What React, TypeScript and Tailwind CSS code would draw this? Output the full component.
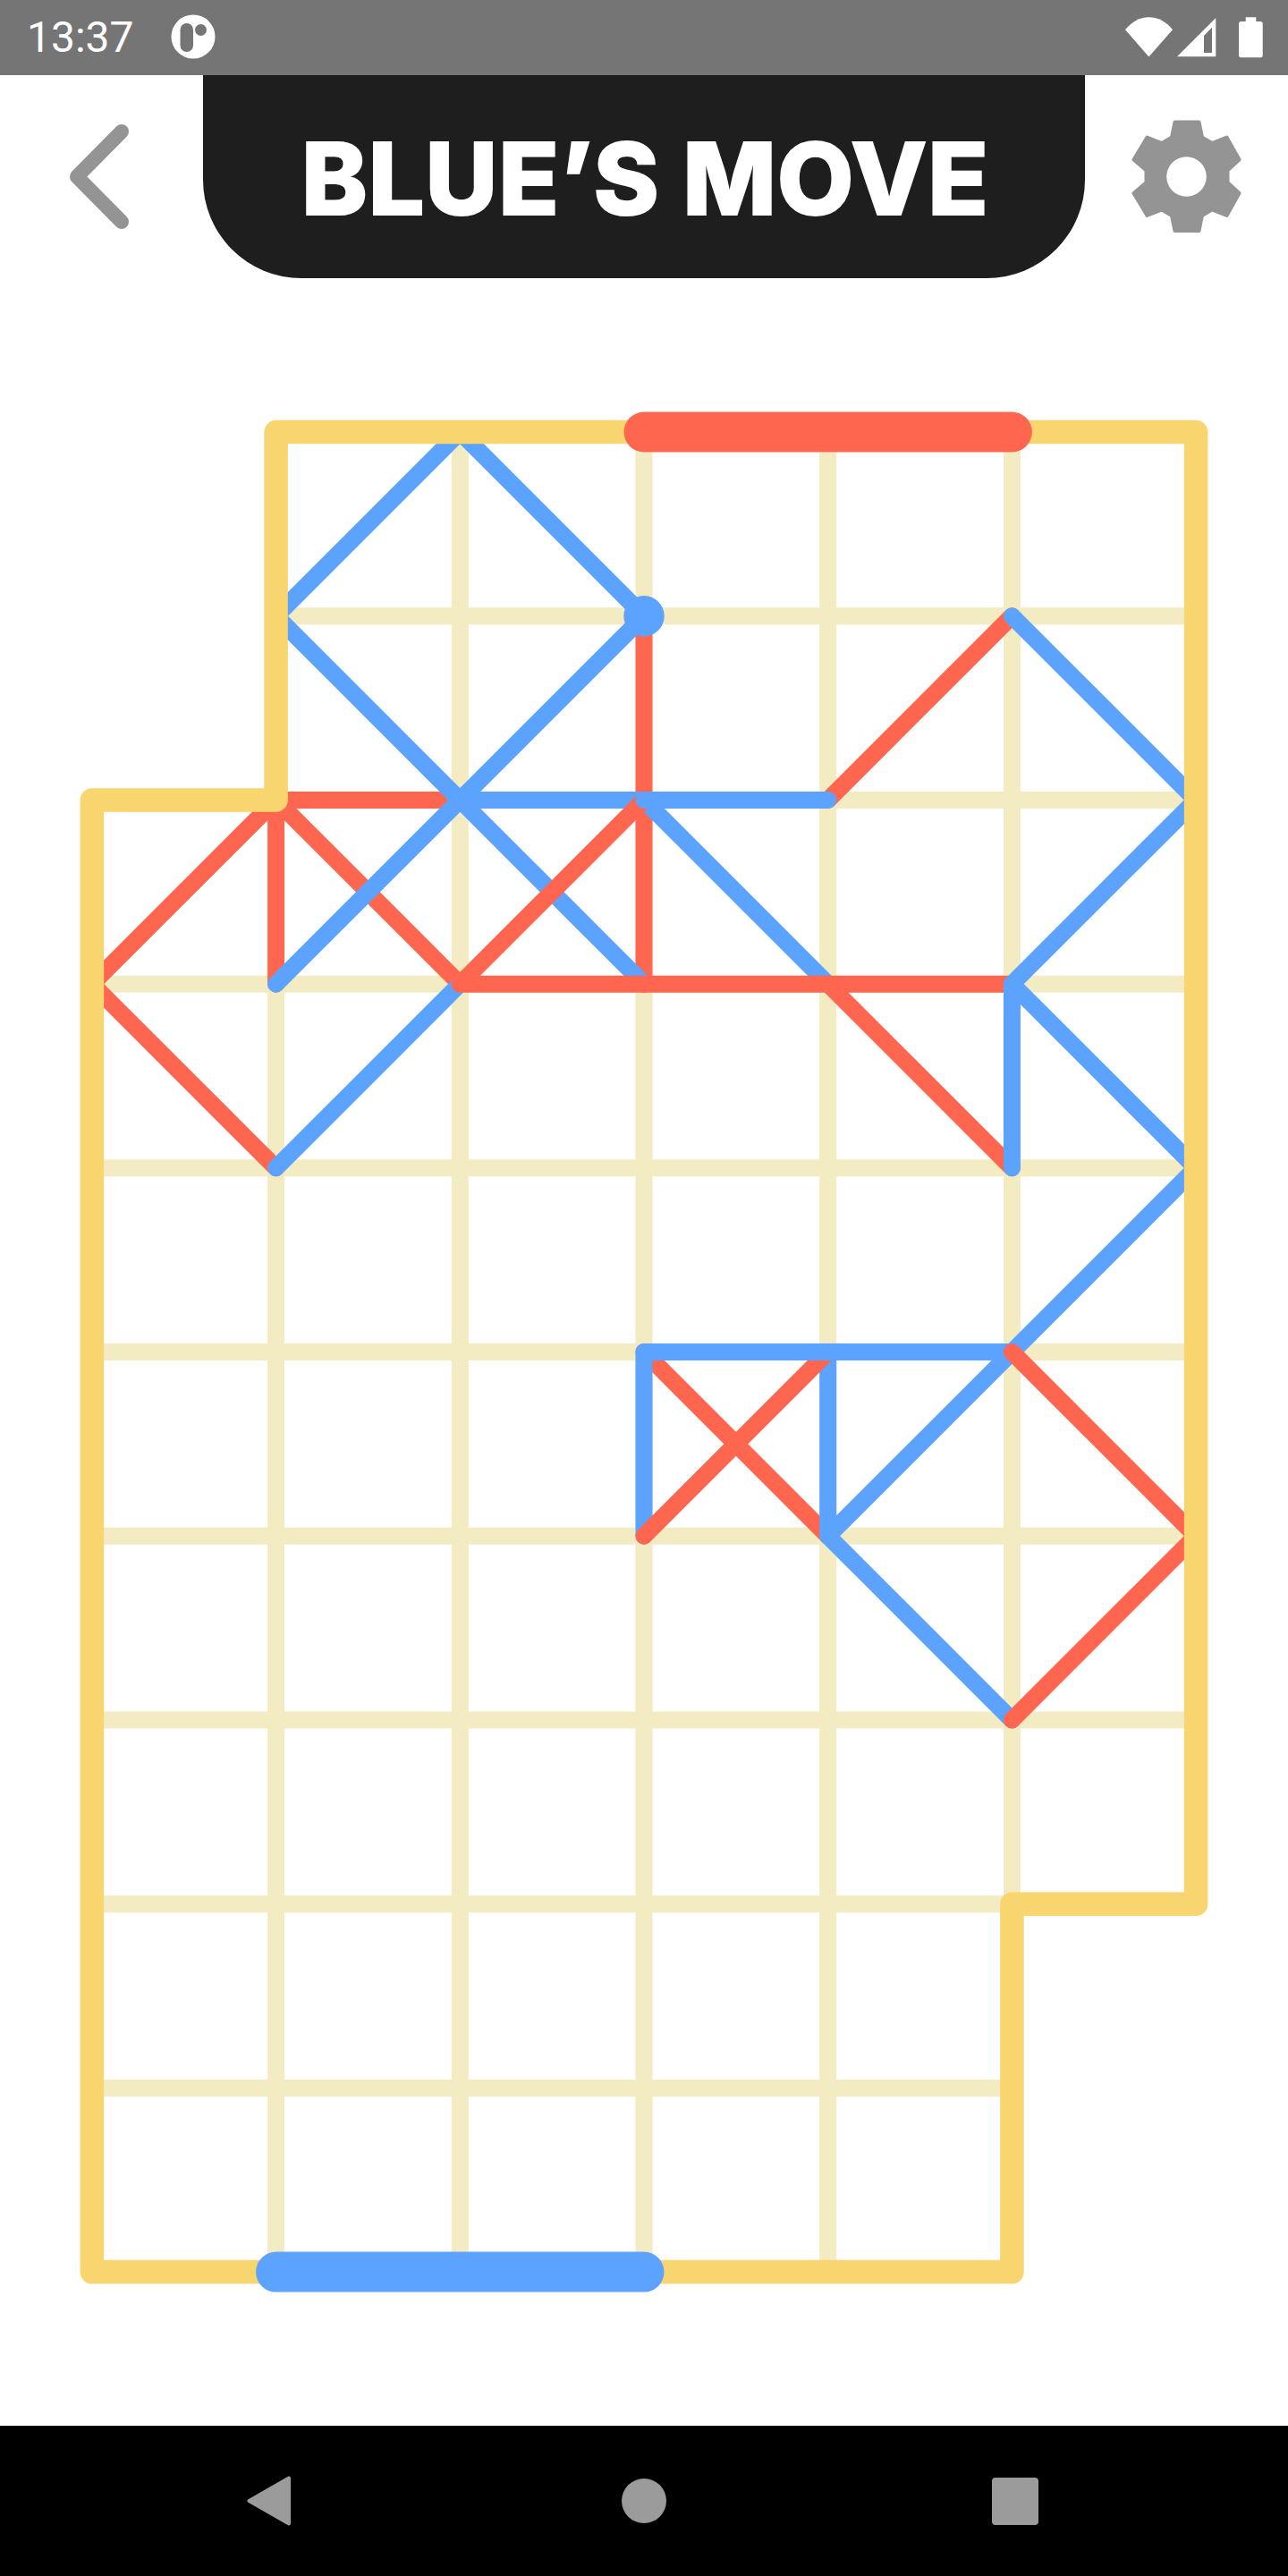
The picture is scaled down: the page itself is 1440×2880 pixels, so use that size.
import React from 'react'

const STEP = 205.71
const X0 = 102.87
const Y0 = 483
const px = (col: number) => X0 + col * STEP
const py = (row: number) => Y0 + row * STEP

const CREAM = '#F3EBC2'
const YELLOW = '#F8D56F'
const RED = '#FF664F'
const BLUE = '#5CA2FF'

type Seg = [number, number, number, number]

// empty lattice, only where it shows inside the outline
const gridLines: Seg[] = [
  [1, 3, 1, 10],
  [2, 0, 2, 10],
  [3, 0, 3, 10],
  [4, 0, 4, 10],
  [5, 0, 5, 8],
  [1, 1, 6, 1],
  [0, 2, 6, 2],
  [0, 3, 6, 3],
  [0, 4, 6, 4],
  [0, 5, 6, 5],
  [0, 6, 6, 6],
  [0, 7, 6, 7],
  [0, 8, 5, 8],
  [0, 9, 5, 9],
]

// played edges, in stacking order
const moves: { color: string; seg: Seg }[] = [
  { color: RED, seg: [3, 1, 3, 3] },
  { color: RED, seg: [0, 3, 1, 2] },
  { color: RED, seg: [0, 3, 1, 4] },
  { color: RED, seg: [1, 2, 1, 3] },
  { color: RED, seg: [1, 2, 2, 2] },
  { color: RED, seg: [1, 2, 2, 3] },
  { color: RED, seg: [4, 2, 5, 1] },
  { color: RED, seg: [4, 3, 5, 4] },
  { color: BLUE, seg: [1, 1, 2, 0] },
  { color: BLUE, seg: [2, 0, 3, 1] },
  { color: BLUE, seg: [1, 1, 2, 2] },
  { color: BLUE, seg: [3, 1, 1, 3] },
  { color: BLUE, seg: [2, 2, 3, 3] },
  { color: BLUE, seg: [1, 4, 2, 3] },
  { color: BLUE, seg: [3, 2, 4, 3] },
  { color: BLUE, seg: [2, 2, 3, 2] },
  { color: RED, seg: [2, 3, 3, 2] },
  { color: BLUE, seg: [3, 2, 4, 2] },
  { color: RED, seg: [2, 3, 5, 3] },
  { color: BLUE, seg: [5, 1, 6, 2] },
  { color: BLUE, seg: [6, 2, 5, 3] },
  { color: BLUE, seg: [5, 3, 6, 4] },
  { color: BLUE, seg: [5, 3, 5, 4] },
  { color: BLUE, seg: [6, 4, 4, 6] },
  { color: BLUE, seg: [4, 6, 5, 7] },
  { color: RED, seg: [3, 5, 4, 6] },
  { color: BLUE, seg: [4, 5, 4, 6] },
  { color: BLUE, seg: [3, 5, 3, 6] },
  { color: RED, seg: [4, 5, 3, 6] },
  { color: BLUE, seg: [3, 5, 5, 5] },
  { color: RED, seg: [5, 5, 6, 6] },
  { color: RED, seg: [6, 6, 5, 7] },
]

const outline: [number, number][] = [
  [1, 0],
  [6, 0],
  [6, 8],
  [5, 8],
  [5, 10],
  [0, 10],
  [0, 2],
  [1, 2],
]

const StatusBar = () => (
  <div className="flex h-[84px] items-center justify-between bg-[#757575] pl-[30px] pr-[28px] text-white">
    <div className="flex items-center gap-[41px]">
      <span className="font-[family-name:Roboto,sans-serif] text-[48px] leading-none font-normal">13:37</span>
      <svg width="50" height="50" viewBox="0 0 50 50" className="-mt-[2px]">
        <circle cx="25" cy="25" r="24.5" fill="#fff" />
        <rect x="10.5" y="10" width="14.5" height="32" rx="7.25" fill="#757575" />
        <circle cx="33.5" cy="17.5" r="6.5" fill="#757575" />
      </svg>
    </div>
    <svg width="154" height="50" viewBox="1258 17 154 50">
      <path d="M1258 33.3C1265 24.5 1274 19.3 1284.4 19.3C1295 19.3 1304 24.5 1311 33.3L1284.4 63.4Z" fill="#fff" />
      <path
        fillRule="evenodd"
        d="M1316 63.3L1359.3 20V63.3ZM1346 40V59H1355V30.7Z"
        fill="#fff"
      />
      <path
        d="M1392.7 19.3H1404.3V24H1409.2Q1411.7 24 1411.7 26.5V61.8Q1411.7 64.3 1409.2 64.3H1387.5Q1385 64.3 1385 61.8V26.5Q1385 24 1387.5 24H1392.7Z"
        fill="#fff"
      />
    </svg>
  </div>
)

const Header = () => (
  <div className="grid h-[227px] grid-cols-[227px_986px_227px]">
    <svg width="227" height="227" viewBox="0 84 227 227">
      <path
        d="M136 147L86 197.5L136 248"
        fill="none"
        stroke="#949494"
        strokeWidth="16"
        strokeLinecap="round"
        strokeLinejoin="round"
      />
    </svg>
    <div className="flex items-center justify-center rounded-b-[110px] bg-[#1E1E1E] pl-[3px] pt-[3px]">
      <h1 className="font-[family-name:Inter,sans-serif] text-[111px] leading-none font-extrabold tracking-[1px] text-white [-webkit-text-stroke:2px_white]">
        BLUE’S MOVE
      </h1>
    </div>
    <svg width="227" height="227" viewBox="1213 84 227 227">
      <path
        fillRule="evenodd"
        stroke="#949494"
        strokeWidth="4"
        strokeLinejoin="round"
        fill="#949494"
        d="M1313.5 136.5H1340.5L1344 153.5L1355 160L1371.5 153.5L1385.5 178.5L1372.5 190.5V204L1385.5 216L1371.5 241L1355 234.5L1344 241L1340.5 258H1313.5L1310 241L1299 234.5L1282.5 241L1267.5 216L1281.5 204V190.5L1267.5 178.5L1282.5 153.5L1299 160L1310 153.5Z"
      />
      <circle cx="1326.5" cy="197.5" r="22.3" fill="#fff" />
    </svg>
  </div>
)

const Board = () => (
  <svg width="1440" height="2401" viewBox="0 311 1440 2401" className="block">
    <g stroke={CREAM} strokeWidth="19">
      {gridLines.map(([a, b, c, d], i) => (
        <line key={i} x1={px(a)} y1={py(b)} x2={px(c)} y2={py(d)} />
      ))}
    </g>
    <g strokeWidth="19" strokeLinecap="round">
      {moves.map(({ color, seg: [a, b, c, d] }, i) => (
        <line key={i} x1={px(a)} y1={py(b)} x2={px(c)} y2={py(d)} stroke={color} />
      ))}
    </g>
    <polygon
      points={outline.map(([c, r]) => `${px(c)},${py(r)}`).join(' ')}
      fill="none"
      stroke={YELLOW}
      strokeWidth="26.5"
      strokeLinejoin="round"
    />
    <line x1={px(3)} y1={py(0)} x2={px(5)} y2={py(0)} stroke={RED} strokeWidth="45" strokeLinecap="round" />
    <line x1={px(1)} y1={py(10)} x2={px(3)} y2={py(10)} stroke={BLUE} strokeWidth="45" strokeLinecap="round" />
    <circle cx={px(3)} cy={py(1)} r="22.7" fill={BLUE} />
  </svg>
)

const NavBar = () => (
  <div className="flex h-[168px] items-center bg-black pl-[276px]">
    <svg width="49" height="56" viewBox="0 0 49 56">
      <path
        d="M47 2.5V53.5L2.5 28Z"
        fill="#9B9B9B"
        stroke="#9B9B9B"
        strokeWidth="4"
        strokeLinejoin="round"
      />
    </svg>
    <div className="ml-[370px] h-[50px] w-[50px] rounded-full bg-[#9B9B9B]" />
    <div className="ml-[364px] h-[53px] w-[52px] rounded-[4px] bg-[#9B9B9B]" />
  </div>
)

export default function App() {
  return (
    <div className="flex h-[2880px] w-[1440px] flex-col bg-white">
      <StatusBar />
      <Header />
      <div className="flex-1">
        <Board />
      </div>
      <NavBar />
    </div>
  )
}
